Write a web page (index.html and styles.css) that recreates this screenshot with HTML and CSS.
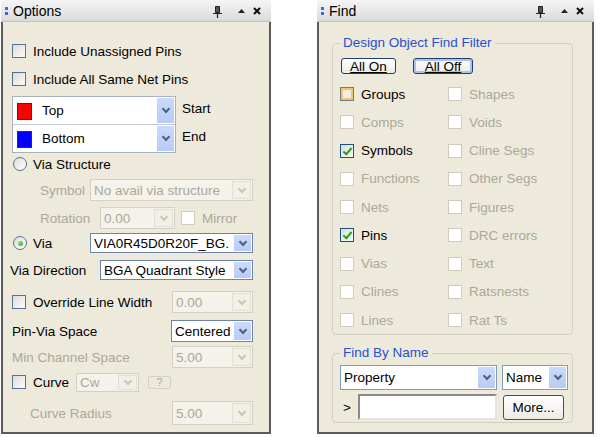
FILE: index.html
```html
<!DOCTYPE html>
<html lang="en">
<head>
    <meta charset="UTF-8">
    <title>Options / Find</title>
    <link rel="stylesheet" href="styles.css">
</head>
<body>

<div class="desktop">

    <!-- Options panel -->
    <section class="panel panel-options">
        <div class="titlebar">
            <span class="grip"></span>
            <span class="title">Options</span>
            <span class="title-icons">
                <svg class="ico-pin" width="9" height="12" viewBox="0 0 9 12"><path d="M2.5 0.5h4v6h-4z" fill="#555" stroke="#222"/><path d="M0 7.5h9M4.5 7.5V12" stroke="#222" stroke-width="1.2"/></svg>
                <svg class="ico-up" width="7" height="4" viewBox="0 0 7 4"><path d="M0 4L3.5 0L7 4z" fill="#222"/></svg>
                <svg class="ico-close" width="8" height="8" viewBox="0 0 8 8"><path d="M1 1l6 6M7 1L1 7" stroke="#111" stroke-width="2"/></svg>
            </span>
        </div>

        <div class="options-body">
            <div class="row"><span class="cb"></span>Include Unassigned Pins</div>
            <div class="row"><span class="cb"></span>Include All Same Net Pins</div>

            <div class="row layers">
                <div class="layer-box">
                    <div class="layer"><span class="swatch red"></span><span class="layer-name">Top</span><span class="combo-btn"></span></div>
                    <div class="layer"><span class="swatch blue"></span><span class="layer-name">Bottom</span><span class="combo-btn"></span></div>
                </div>
                <div class="layer-labels"><span>Start</span><span>End</span></div>
            </div>

            <div class="row"><span class="radio"></span>Via Structure</div>

            <div class="row disabled">
                <span class="label label-symbol">Symbol</span>
                <div class="combo is-disabled combo-wide"><span class="combo-text">No avail via structure</span><span class="combo-btn"></span></div>
            </div>

            <div class="row disabled">
                <span class="label label-rotation">Rotation</span>
                <div class="combo is-disabled combo-rotation"><span class="combo-text">0.00</span><span class="combo-btn"></span></div>
                <span class="cb is-disabled cb-mirror"></span>Mirror
            </div>

            <div class="row">
                <span class="radio checked"></span>Via
                <div class="combo combo-wide combo-via push"><span class="combo-text">VIA0R45D0R20F_BG.</span><span class="combo-btn"></span></div>
            </div>

            <div class="row">
                <span class="label-flush">Via Direction</span>
                <div class="combo combo-dir push"><span class="combo-text">BGA Quadrant Style</span><span class="combo-btn"></span></div>
            </div>

            <div class="row">
                <span class="cb"></span>Override Line Width
                <div class="combo is-disabled combo-small push"><span class="combo-text">0.00</span><span class="combo-btn"></span></div>
            </div>

            <div class="row">
                Pin-Via Space
                <div class="combo combo-small combo-space push"><span class="combo-text">Centered</span><span class="combo-btn"></span></div>
            </div>

            <div class="row disabled">
                Min Channel Space
                <div class="combo is-disabled combo-small push"><span class="combo-text">5.00</span><span class="combo-btn"></span></div>
            </div>

            <div class="row">
                <span class="cb"></span>Curve
                <div class="combo is-disabled combo-cw"><span class="combo-text">Cw</span><span class="combo-btn"></span></div>
                <span class="btn-help">?</span>
            </div>

            <div class="row disabled">
                <span class="label-radius">Curve Radius</span>
                <div class="combo is-disabled combo-small combo-radius push"><span class="combo-text">5.00</span><span class="combo-btn"></span></div>
            </div>
        </div>
    </section>

    <!-- Find panel -->
    <section class="panel panel-find">
        <div class="titlebar">
            <span class="grip"></span>
            <span class="title">Find</span>
            <span class="title-icons">
                <svg class="ico-pin" width="9" height="12" viewBox="0 0 9 12"><path d="M2.5 0.5h4v6h-4z" fill="#555" stroke="#222"/><path d="M0 7.5h9M4.5 7.5V12" stroke="#222" stroke-width="1.2"/></svg>
                <svg class="ico-up" width="7" height="4" viewBox="0 0 7 4"><path d="M0 4L3.5 0L7 4z" fill="#222"/></svg>
                <svg class="ico-close" width="8" height="8" viewBox="0 0 8 8"><path d="M1 1l6 6M7 1L1 7" stroke="#111" stroke-width="2"/></svg>
            </span>
        </div>

        <div class="find-body">
            <fieldset class="group group-filter">
                <legend>Design Object Find Filter</legend>
                <div class="btn-row">
                    <span class="btn btn-on">All On</span>
                    <span class="btn btn-off is-default">All Off</span>
                </div>
                <div class="filter-grid">
                    <div class="item"><span class="cb hover"></span>Groups</div>
                    <div class="item disabled"><span class="cb is-disabled"></span>Shapes</div>
                    <div class="item disabled"><span class="cb is-disabled"></span>Comps</div>
                    <div class="item disabled"><span class="cb is-disabled"></span>Voids</div>
                    <div class="item"><span class="cb checked"></span>Symbols</div>
                    <div class="item disabled"><span class="cb is-disabled"></span>Cline Segs</div>
                    <div class="item disabled"><span class="cb is-disabled"></span>Functions</div>
                    <div class="item disabled"><span class="cb is-disabled"></span>Other Segs</div>
                    <div class="item disabled"><span class="cb is-disabled"></span>Nets</div>
                    <div class="item disabled"><span class="cb is-disabled"></span>Figures</div>
                    <div class="item"><span class="cb checked"></span>Pins</div>
                    <div class="item disabled"><span class="cb is-disabled"></span>DRC errors</div>
                    <div class="item disabled"><span class="cb is-disabled"></span>Vias</div>
                    <div class="item disabled"><span class="cb is-disabled"></span>Text</div>
                    <div class="item disabled"><span class="cb is-disabled"></span>Clines</div>
                    <div class="item disabled"><span class="cb is-disabled"></span>Ratsnests</div>
                    <div class="item disabled"><span class="cb is-disabled"></span>Lines</div>
                    <div class="item disabled"><span class="cb is-disabled"></span>Rat Ts</div>
                </div>
            </fieldset>

            <fieldset class="group group-name">
                <legend>Find By Name</legend>
                <div class="name-row">
                    <div class="combo combo-property"><span class="combo-text">Property</span><span class="combo-btn"></span></div>
                    <div class="combo combo-name"><span class="combo-text">Name</span><span class="combo-btn"></span></div>
                </div>
                <div class="name-row">
                    <span class="prompt">&gt;</span>
                    <span class="name-input"></span>
                    <span class="btn btn-more">More...</span>
                </div>
            </fieldset>
        </div>
    </section>

</div>

</body>
</html>
```

FILE: styles.css
```css
/* Page */
body {
    margin: 0;
    background: #fff;
    font-family: "Liberation Sans", Arial, sans-serif;
    font-size: 13.5px;
    color: #000;
}

.desktop {
    display: flex;
    align-items: flex-start;
    padding-left: 1px;
}

/* Docking panels */
.panel {
    box-sizing: border-box;
    height: 434px;
    background: #eeeadb;
    border: 2px solid #5c5c5c;
    border-top: none;
    display: flex;
    flex-direction: column;
}

.panel-options {
    width: 270px;
}

.panel-find {
    width: 277px;
    margin-left: 46px;
}

.titlebar {
    height: 21px;
    margin: 0 -2px;
    display: flex;
    align-items: center;
    background: linear-gradient(#f6f6f6, #dadada);
    border-bottom: 1px solid #c4c4c4;
    flex-shrink: 0;
}

.grip {
    width: 3px;
    height: 3px;
    margin: -5px 5px 0 4px;
    background: #3a6ed6;
    box-shadow: 0 5px 0 #3a6ed6;
}

.title {
    font-size: 14px;
}

.title-icons {
    margin-left: auto;
    padding-right: 10px;
    display: flex;
    align-items: center;
}

.ico-pin {
    margin-right: 16px;
    margin-top: 2px;
}

.ico-up {
    margin-right: 8px;
}

/* Checkbox / radio */
.cb {
    box-sizing: border-box;
    width: 14px;
    height: 14px;
    margin-right: 7px;
    flex-shrink: 0;
    border: 1px solid #5b6f93;
    background: linear-gradient(135deg, #dcdcd6, #fbfbfa);
    position: relative;
}

.cb.is-disabled {
    border-color: #cfccbf;
    background: #fff;
}

.cb.hover {
    border-color: #6d7893;
    box-shadow: inset 0 0 0 2px #f6c365;
    background: #f2eee2;
}

.cb.checked {
    border-color: #1c5180;
}

.cb.checked::after {
    content: '';
    position: absolute;
    left: 4px;
    top: 1px;
    width: 3px;
    height: 7px;
    border-right: 2px solid #21a121;
    border-bottom: 2px solid #21a121;
    transform: rotate(40deg);
}

.radio {
    box-sizing: border-box;
    width: 14px;
    height: 14px;
    margin: 0 6px 0 1px;
    border: 1px solid #5b6f93;
    border-radius: 50%;
    background: linear-gradient(135deg, #dcdcd6, #fff);
    display: flex;
    align-items: center;
    justify-content: center;
}

.radio.checked::after {
    content: '';
    width: 5px;
    height: 5px;
    border-radius: 50%;
    background: radial-gradient(circle at 35% 35%, #8ee38e, #21a121);
}

/* Combo boxes */
.combo {
    box-sizing: border-box;
    height: 22px;
    display: flex;
    align-items: stretch;
    background: #fff;
    border: 1px solid #7f9db9;
}

.combo-text {
    flex: 1;
    padding-left: 3px;
    display: flex;
    align-items: center;
    white-space: nowrap;
    overflow: hidden;
}

.combo-btn {
    width: 17px;
    margin: 1px;
    flex-shrink: 0;
    background: linear-gradient(#cbdafc, #b7cbf5);
    display: flex;
    align-items: center;
    justify-content: center;
}

.combo-btn::after {
    content: '';
    width: 4px;
    height: 4px;
    margin-top: -3px;
    border-right: 2px solid #4d6185;
    border-bottom: 2px solid #4d6185;
    transform: rotate(45deg);
}

.combo.is-disabled {
    color: #aca899;
    background: #f4f2ea;
    border-color: #d4d1c4;
}

.combo.is-disabled .combo-btn {
    background: #f1efe6;
    border: 1px solid #e2dfd3;
    margin: 1px 1px 1px 0;
}

.combo.is-disabled .combo-btn::after {
    border-color: #c9c6b8;
}

/* Options panel layout */
.options-body {
    display: grid;
    grid-template-rows: 28px 28px 60px 22px 30px 26px 24px 30px 34px 24px 28px 22px 40px;
    padding: 15px 16px 0 9px;
}

.row {
    display: flex;
    align-items: center;
    white-space: nowrap;
}

.disabled {
    color: #aca899;
}

.push {
    margin-left: auto;
}

.label-symbol {
    padding-left: 28px;
    width: 50px;
}

.label-rotation {
    padding-left: 28px;
    width: 60px;
}

.label-flush {
    margin-left: -2px;
}

.label-radius {
    padding-left: 18px;
}

.combo-wide {
    width: 163px;
}

.combo-via {
    height: 20px;
    border-color: #6f83a8;
}

.combo-dir {
    width: 153px;
    height: 20px;
    border-color: #6f83a8;
}

.combo-rotation {
    width: 75px;
}

.cb-mirror {
    margin-left: 6px;
}

.combo-small {
    width: 81px;
}

.combo-space {
    width: 82px;
    border-color: #6f83a8;
}

.combo-radius {
    height: 24px;
}

.combo-cw {
    width: 63px;
    height: 19px;
    margin-left: 7px;
}

.btn-help {
    box-sizing: border-box;
    width: 23px;
    height: 13px;
    margin-left: 9px;
    border: 1px solid #d4d1c4;
    border-radius: 2px;
    color: #aca899;
    font-size: 11px;
    display: flex;
    align-items: center;
    justify-content: center;
}

/* Layer selector */
.layers {
    align-items: flex-start;
    padding-top: 3px;
}

.layer-box {
    width: 162px;
    border: 1px solid #a7b1c1;
    background: #fff;
}

.layer {
    height: 27px;
    display: flex;
    align-items: stretch;
}

.layer + .layer {
    border-top: 1px solid #c3c9d3;
}

.swatch {
    width: 13px;
    height: 15px;
    margin: 6px 10px 0 4px;
    border: 1px solid #333;
}

.swatch.red {
    background: #f00;
}

.swatch.blue {
    background: #00f;
}

.layer-name {
    flex: 1;
    display: flex;
    align-items: center;
}

.layer-labels {
    display: flex;
    flex-direction: column;
    padding: 5px 0 0 6px;
    gap: 13px;
}

/* Find panel layout */
.find-body {
    padding: 13px 19px 0 13px;
}

.group {
    margin: 0;
    padding: 7px 7px 0;
    border: 1px solid #d3d0c2;
    border-radius: 4px;
}

.group legend {
    padding: 0 3px;
    line-height: 16px;
    color: #2550d0;
}

.btn-row {
    display: flex;
}

.btn {
    box-sizing: border-box;
    height: 16px;
    border: 1px solid #203f70;
    border-radius: 3px;
    background: linear-gradient(#fff, #ecebe4);
    display: flex;
    align-items: center;
    justify-content: center;
}

.btn-on {
    width: 55px;
    margin-left: 1px;
    text-decoration: underline;
}

.btn-off {
    width: 60px;
    margin-left: 17px;
    text-decoration: underline;
}

.btn.is-default {
    box-shadow: inset 0 0 0 2px #a9c3ef;
}

.filter-grid {
    display: grid;
    grid-template-columns: 108px 1fr;
    grid-auto-rows: 28.25px;
    margin-top: 6px;
}

.item {
    display: flex;
    align-items: center;
    white-space: nowrap;
}

.group-name {
    margin-top: 10px;
    padding: 4px 4px 2px 7px;
}

.name-row {
    display: flex;
    align-items: center;
}

.name-row + .name-row {
    margin-top: 4px;
}

.combo-property {
    width: 157px;
    height: 25px;
}

.combo-name {
    width: 66px;
    height: 25px;
    margin-left: 5px;
}

.prompt {
    width: 15px;
    padding-left: 3px;
}

.name-input {
    box-sizing: border-box;
    width: 139px;
    height: 26px;
    background: #fff;
    border: 2px solid;
    border-color: #8a8a8a #e4e4e4 #e4e4e4 #8a8a8a;
}

.btn-more {
    width: 61px;
    height: 25px;
    margin-left: 6px;
    border-color: #3a5278;
}
```
